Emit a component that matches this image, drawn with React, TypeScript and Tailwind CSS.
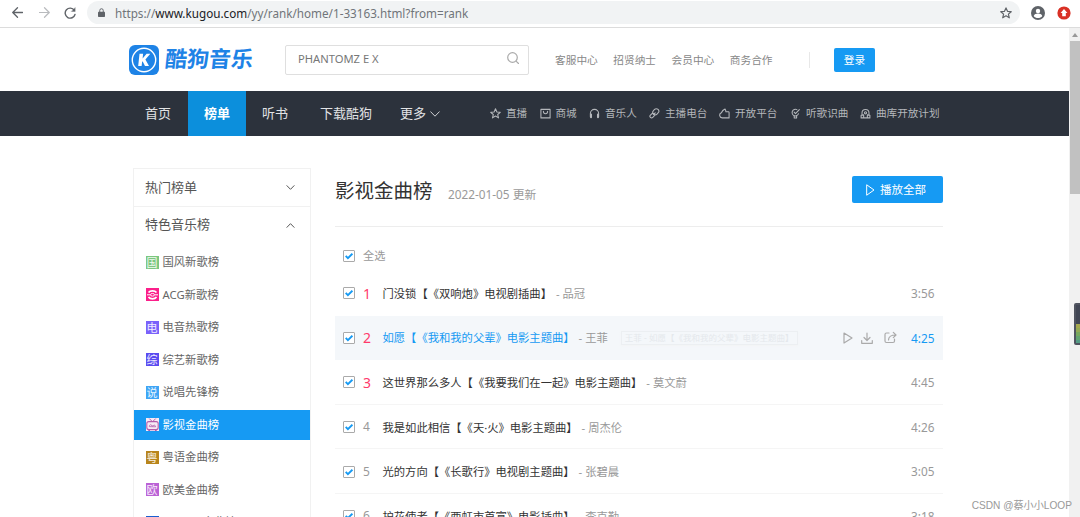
import React from "react";

type SvgProps = { className?: string; children: React.ReactNode; box?: string; sw?: number };

function Line({ className = "", children, box = "0 0 12 12", sw = 1 }: SvgProps) {
  return (
    <svg
      viewBox={box}
      className={`shrink-0 ${className}`}
      fill="none"
      stroke="currentColor"
      strokeWidth={sw}
      strokeLinecap="round"
      strokeLinejoin="round"
    >
      {children}
    </svg>
  );
}

const STAR = "M6 .9l1.5 3.4 3.7.4-2.8 2.4.9 3.7L6 8.8l-3.3 2 .9-3.7L.8 4.7l3.7-.4z";

const topLinks = ["客服中心", "招贤纳士", "会员中心", "商务合作"];

const tools = [
  { text: "直播", width: "w-[49.5px]", icon: <path d={STAR} /> },
  {
    text: "商城",
    width: "w-[49.5px]",
    icon: (
      <>
        <path d="M1 1.5h10v9.300H1z" />
        <path d="M3.700 3.500c0 3.600 4.600 3.600 4.600 0" />
      </>
    ),
  },
  {
    text: "音乐人",
    width: "w-[60px]",
    icon: (
      <>
        <path d="M1.500 9.500V6a4.500 4.500 0 0 1 9 0v3.500" />
        <path d="M2.200 7.200v3M9.800 7.200v3" strokeWidth="2.200" />
      </>
    ),
  },
  {
    text: "主播电台",
    width: "w-[70px]",
    icon: (
      <>
        <rect x="4.700" y=".6" width="5.400" height="7" rx="2.700" transform="rotate(45 7.400 4.100)" />
        <rect x="1.600" y="5.800" width="3.600" height="5.200" rx="1.800" transform="rotate(45 3.400 8.400)" />
        <path d="M5.200 6.800l1.600-1.600" />
      </>
    ),
  },
  {
    text: "开放平台",
    width: "w-[71px]",
    icon: <path d="M3.500 10.800a2.900 2.900 0 0 1-.9-5.600C3.400 3.300 4.800 2 6.600 1.200c.7 1 .9 1.800.9 2.900h2.700c.6 0 .8.300.8.800v5.900z" />,
  },
  {
    text: "听歌识曲",
    width: "w-[70px]",
    icon: (
      <>
        <path d="M7.500 1.800a3.600 3.600 0 1 0 1.800 4.400" />
        <path d="M4.500 4.500l1.500 1.700 4.200-4.400M4.600 8.500v2.500h2.600V8.500" />
      </>
    ),
  },
  {
    text: "曲库开放计划",
    width: "w-[80px]",
    icon: (
      <>
        <path d="M2.200 7V5.500a3.800 3.800 0 0 1 7.600 0V7M4 10.800H1.200V8L4 7.500zM8 10.800h2.800V8L8 7.500zM4 10.800h4" />
        <circle cx="6" cy="5.200" r="1.200" />
      </>
    ),
  },
];

const charts = [
  { name: "国风新歌榜", glyph: "国", color: "bg-[#7cc77f]" },
  { name: "ACG新歌榜", glyph: "", color: "bg-[#fb1f8a]" },
  { name: "电音热歌榜", glyph: "电", color: "bg-[#7a62fb]" },
  { name: "综艺新歌榜", glyph: "综", color: "bg-[#5a4bf0]" },
  { name: "说唱先锋榜", glyph: "说", color: "bg-[#3fa5f5]" },
  { name: "影视金曲榜", glyph: "tv", color: "bg-[#f6eaf5]", active: true },
  { name: "粤语金曲榜", glyph: "粤", color: "bg-[#b8851c]" },
  { name: "欧美金曲榜", glyph: "欧", color: "bg-[#bb62d6]" },
  { name: "Beyond金曲榜", glyph: "音", color: "bg-[#1a5fd0]" },
];

const songs = [
  { title: "门没锁【《双响炮》电视剧插曲】", singer: "品冠", time: "3:56" },
  { title: "如愿【《我和我的父辈》电影主题曲】", singer: "王菲", time: "4:25", hover: true },
  { title: "这世界那么多人【《我要我们在一起》电影主题曲】", singer: "莫文蔚", time: "4:45" },
  { title: "我是如此相信【《天·火》电影主题曲】", singer: "周杰伦", time: "4:26" },
  { title: "光的方向【《长歌行》电视剧主题曲】", singer: "张碧晨", time: "3:05" },
  { title: "护花使者【《西虹市首富》电影插曲】", singer: "李克勤", time: "3:18" },
];

function Check() {
  return (
    <span className="flex size-[12px] shrink-0 items-center justify-center rounded-[1px] border border-[#aaa] bg-white">
      <svg viewBox="0 0 8 8" className="size-[8px]" fill="none" stroke="#169af3" strokeWidth="1.9">
        <path d="M.7 3.900l2.200 2.200L7.400 1.700" />
      </svg>
    </span>
  );
}

function ChartIcon({ glyph, color }: { glyph: string; color: string }) {
  return (
    <span className={`flex size-[13px] shrink-0 items-center justify-center overflow-hidden text-[11px] leading-[13px] text-white/90 ${color}`}>
      {glyph === "tv" ? (
        <svg viewBox="0 0 13 13" className="size-[13px]" fill="none" stroke="#b45cab">
          <rect x=".8" y="3.600" width="11.400" height="8" rx="2" strokeWidth="1.100" />
          <path d="M3.300.6l2.700 2.700M9.700.6L7 3.300M2.300 12.500h1.700M9 12.500h1.700" />
          <path d="M3.300 8.600c0-2.400 2.400-2.400 2.700-.6h1.200c.4-1.400 2.400-1 2.400.8z" strokeWidth=".8" />
        </svg>
      ) : glyph ? (
        glyph
      ) : (
        <svg viewBox="0 0 13 13" className="size-[13px]" fill="none" stroke="white">
          <path d="M2.500 4.600a4.600 3.600 0 0 1 8 0M2.500 9a4.600 3.600 0 0 0 8 0" strokeWidth="1.700" />
          <path d="M1 6.800h3.200M8.800 6.800H12" strokeWidth="1" />
          <ellipse cx="6.500" cy="6.800" rx="2.100" ry="1.300" strokeWidth=".9" />
        </svg>
      )}
    </span>
  );
}

function BrowserBar() {
  return (
    <div className="flex h-[28px] shrink-0 items-start border-b border-[#dcdcdc] bg-white pt-px text-[#5f6368]">
      <Line className="mt-[6px] ml-[12px] h-[11px] w-[11px]" sw={1.4}>
        <path d="M11.500 6H.8M6 .8L.8 6 6 11.200" />
      </Line>
      <Line className="mt-[6px] ml-[16px] h-[11px] w-[11px] text-[#b9bbbe]" sw={1.3}>
        <path d="M.5 6h10.700M6 .8L11.200 6 6 11.200" />
      </Line>
      <Line className="mt-[6px] ml-[14px] h-[12px] w-[12px]" sw={1.4}>
        <path d="M10.300 3.300A5 5 0 1 0 11 7.500" />
        <path d="M11.200.8v3.700H7.500z" fill="currentColor" strokeWidth=".3" />
      </Line>
      <div className="ml-[11px] flex h-[23px] w-[933px] items-center rounded-full bg-[#f1f3f4] pl-[11px]">
        <svg viewBox="0 0 8 10" className="h-[9px] w-[7px]" fill="none">
          <rect y="4" width="8" height="6" rx=".8" fill="#5f6368" />
          <path d="M2 4.500V2.700a2 2 0 0 1 4 0v1.800" stroke="#5f6368" strokeWidth="1.100" />
        </svg>
        <span className="ml-[10px] w-[354px] text-[11.7px] leading-[22px] whitespace-nowrap text-[#70757a]">
          https://<span className="text-[#202124]">www.kugou.com</span>/yy/rank/home/1-33163.html?from=rank
        </span>
        <Line className="mr-[8px] ml-auto size-[12px]" sw={1.2}>
          <path d={STAR} />
        </Line>
      </div>
      <svg viewBox="0 0 14 14" className="mt-[5px] ml-[11px] size-[14px]">
        <circle cx="7" cy="7" r="7" fill="#5f6368" />
        <circle cx="7" cy="5" r="2.200" fill="white" />
        <path d="M2.700 9.900c1.300-3.100 7.300-3.100 8.600 0-2 2.700-6.600 2.700-8.600 0z" fill="white" />
      </svg>
      <svg viewBox="0 0 14 14" className="mt-[5px] ml-[12px] size-[14px]">
        <circle cx="7" cy="7" r="6.600" fill="#d93025" />
        <path d="M7 3l3.400 4H8.800v3.300H5.200V7H3.600z" fill="white" />
      </svg>
    </div>
  );
}

function Header() {
  return (
    <header className="flex h-[63px] shrink-0 items-center pl-[129px]">
      <svg viewBox="0 0 30 30" className="size-[30px] shrink-0">
        <rect width="30" height="30" rx="6" fill="#1e83e6" />
        <circle cx="15" cy="15" r="11.700" fill="none" stroke="white" strokeWidth="1.400" />
        <path d="M10.500 8.800h3.600l-.5 4.700L17.600 8.800h3.700l-4.900 5.600 3.600 6.500H16l-2.400-4.600-.5.600-.5 4H9.200z" fill="white" />
      </svg>
      <div className="ml-[6px] w-[90px] -skew-x-6 pb-[3px] text-[22px] leading-[30px] font-bold whitespace-nowrap text-[#1e83e6]">
        酷狗音乐
      </div>
      <div className="ml-[30px] flex h-[30px] w-[244px] shrink-0 items-center justify-between rounded-[2px] border border-[#dfdfdf] pr-[9px] pl-[12px] text-[11.2px] text-[#777]">
        <span>PHANTOMZ E X</span>
        <Line className="-mt-[3px] size-[12px] text-[#aaa]" sw={1.2}>
          <circle cx="5.500" cy="5.500" r="4.800" />
          <path d="M9.300 9.300l2.200 2.200" />
        </Line>
      </div>
      <nav className="ml-[26px] flex w-[254px] gap-[15.5px] pt-[2px] text-[10.7px] whitespace-nowrap text-[#888]">
        {topLinks.map((t) => (
          <span key={t}>{t}</span>
        ))}
      </nav>
      <span className="h-[16px] w-px bg-[#e8e8e8]" />
      <button className="ml-[24px] h-[24px] w-[41px] rounded-[2px] bg-[#169af3] pt-[2px] text-[10.7px] text-white">登录</button>
    </header>
  );
}

function Navigation() {
  return (
    <nav className="flex h-[45px] shrink-0 items-center bg-[#2c323c] pl-[129px] text-[13px] whitespace-nowrap text-[#e2e3e5]">
      <span className="w-[59px] px-[16px]">首页</span>
      <span className="flex h-full w-[58px] items-center justify-center bg-[#0c8fdc] font-bold text-white">榜单</span>
      <span className="w-[58px] px-[16px]">听书</span>
      <span className="w-[84px] px-[16px]">下载酷狗</span>
      <span className="flex w-[102px] items-center gap-[4px] pl-[12px]">
        更多
        <Line box="0 0 10 6" className="h-[6px] w-[10px]" sw={0.9}>
          <path d="M.7.8L5 5.200 9.300.8" />
        </Line>
      </span>
      {tools.map((t) => (
        <span key={t.text} className={`flex shrink-0 items-center gap-[5px] text-[10.6px] text-[#b4b7bb] ${t.width}`}>
          <Line className="size-[11px]" sw={1.15}>
            {t.icon}
          </Line>
          {t.text}
        </span>
      ))}
    </nav>
  );
}

function Sidebar() {
  return (
    <aside className="h-[349px] w-[178px] shrink-0 overflow-hidden border border-b-0 border-[#f1f1f1] text-[#555]">
      <div className="flex h-[38px] items-center justify-between border-b border-[#f1f1f1] pr-[15px] pl-[11px] text-[13px]">
        热门榜单
        <Line box="0 0 10 6" className="h-[5px] w-[9px]" sw={1.2}>
          <path d="M.7.8L5 5.200 9.300.8" />
        </Line>
      </div>
      <div className="flex h-[36px] items-center justify-between pr-[15px] pl-[11px] text-[13px]">
        特色音乐榜
        <Line box="0 0 10 6" className="h-[5px] w-[9px]" sw={1.2}>
          <path d="M.7 5.200L5 .8l4.300 4.400" />
        </Line>
      </div>
      <ul className="flex flex-col gap-[2.5px] pt-[4px]">
        {charts.map((c) => (
          <li
            key={c.name}
            className={`flex h-[30px] shrink-0 items-center gap-[4px] pl-[11.5px] text-[11.3px] whitespace-nowrap ${
              c.active ? "bg-[#169af3] text-white" : "text-[#666]"
            }`}
          >
            <ChartIcon glyph={c.glyph} color={c.color} />
            <span className="pt-px">{c.name}</span>
          </li>
        ))}
      </ul>
    </aside>
  );
}

function SongList() {
  return (
    <main className="ml-[24px] w-[608px] shrink-0">
      <div className="flex h-[59px] items-start border-b border-[#ededed]">
        <h1 className="mt-[8px] w-[113px] text-[19.5px] leading-[30px] whitespace-nowrap text-[#333]">影视金曲榜</h1>
        <span className="mt-[16px] text-[11.8px] leading-[20px] text-[#999]">2022-01-05 更新</span>
        <button className="mt-[8px] ml-auto flex h-[27px] w-[91px] items-center gap-[5px] rounded-[2px] bg-[#169af3] pl-[14px] text-[11.5px] text-white">
          <Line className="h-[12px] w-[9px]" box="0 0 9 12">
            <path d="M1 1l7 5-7 5z" />
          </Line>
          播放全部
        </button>
      </div>
      <div className="mt-[14px] flex h-[30px] items-center gap-[8px] pl-[8px] text-[11.2px] text-[#999]">
        <Check />
        <span className="pt-px">全选</span>
      </div>
      <ul className="text-[11.3px] whitespace-nowrap">
        {songs.map((s, i) => (
          <li
            key={s.title}
            className={`flex h-[44.6px] items-center border-b pt-px pl-[8px] ${
              s.hover ? "border-[#f4f7fa] bg-[#f4f7fa]" : i === 0 ? "border-white" : "border-[#f5f5f5]"
            }`}
          >
            <Check />
            <span className={`ml-[8px] w-[19.5px] ${i < 3 ? "text-[14px] text-[#ff3a6b]" : "text-[12px] text-[#999]"}`}>{i + 1}</span>
            <span className={`pt-[2px] ${s.hover ? "text-[#169af3]" : "text-[#333]"}`}>{s.title}</span>
            <span className="ml-[4px] pt-[2px] text-[#999]">- {s.singer}</span>
            {s.hover && (
              <>
                <span className="ml-[13px] flex h-[14px] w-[177px] items-center border border-[#eceff2] pl-[3px] text-[8.5px] text-[#e4e8ec] shadow-sm shadow-gray-100">
                  王菲 - 如愿【《我和我的父辈》电影主题曲】
                </span>
                <span className="ml-auto flex items-center text-[#aaa]">
                  <Line className="h-[12px] w-[10px]" box="0 0 10 12" sw={1.2}>
                    <path d="M1 1l8 5-8 5z" />
                  </Line>
                  <Line className="ml-[8px] size-[12px]" sw={1.2}>
                    <path d="M6 1v7M3 5.500l3 3 3-3M.7 8.500v2.800h10.600V8.500" />
                  </Line>
                  <Line className="ml-[11px] size-[13px]" box="0 0 13 12" sw={1.2}>
                    <path d="M5 1.500H2.500c-1 0-1.500.5-1.500 1.500v6.500c0 1 .5 1.500 1.500 1.500H9c1 0 1.500-.5 1.500-1.500V7.500" />
                    <path d="M4.500 8.500C4.500 5 7 3.500 12 3.500M9.300.8L12 3.500 9.300 6.200" />
                  </Line>
                </span>
              </>
            )}
            <span className={`mr-[8.5px] pt-px text-[11.8px] ${s.hover ? "ml-[14px] text-[#169af3]" : "ml-auto text-[#999]"}`}>{s.time}</span>
          </li>
        ))}
      </ul>
    </main>
  );
}

export default function App() {
  return (
    <div className="relative flex h-[517px] w-[1080px] flex-col overflow-hidden bg-white font-['Noto_Sans','Noto_Sans_CJK_SC',sans-serif] [text-spacing-trim:space-all]">
      <BrowserBar />
      <div className="flex h-[489px]">
        <div className="flex w-[1069px] shrink-0 flex-col overflow-hidden">
          <Header />
          <Navigation />
          <div className="mt-[32px] flex pl-[133px]">
            <Sidebar />
            <SongList />
          </div>
        </div>
        <div className="flex w-[11px] shrink-0 flex-col items-center bg-[#f1f1f1]">
          <svg viewBox="0 0 11 13" className="h-[13px] w-[11px] shrink-0">
            <path d="M3 9l3-4 3 4z" fill="#999" />
          </svg>
          <div className="h-[153px] w-[10px] self-end bg-[#c1c1c1]" />
        </div>
      </div>
      <div className="absolute top-[303px] -right-[4px] flex h-[42px] w-[10px] flex-col justify-end overflow-hidden rounded-[2px] border-2 border-[#50545f] bg-[#414654]">
        <div className="flex h-[19px] flex-col">
          <i className="h-[4px] bg-[#a5a84e]" />
          <i className="h-[4px] bg-[#93a954]" />
          <i className="h-[4px] bg-[#77a85d]" />
          <i className="h-[4px] bg-[#63a370]" />
          <i className="h-[3px] bg-[#549b85]" />
        </div>
      </div>
      <div className="absolute top-[498px] right-[8px] font-['Liberation_Sans','Noto_Sans_CJK_SC',sans-serif] text-[10.15px] leading-[16px] whitespace-nowrap text-[#999]">
        CSDN @蔡小小LOOP
      </div>
    </div>
  );
}
